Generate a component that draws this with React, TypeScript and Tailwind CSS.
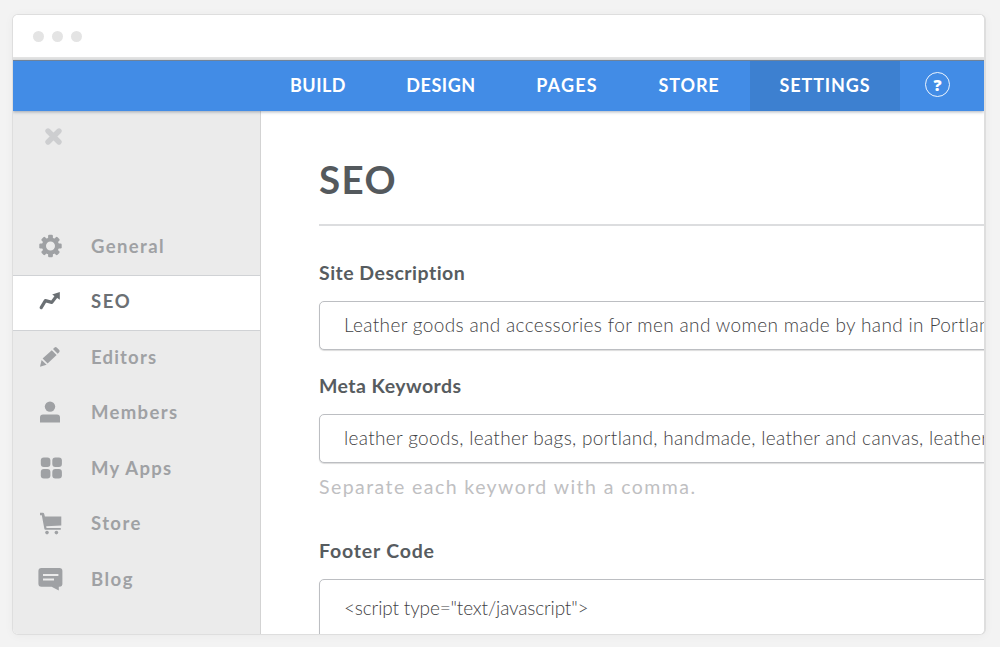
import type { ReactNode } from "react";
import clsx from "clsx";

const navItems = [
  { label: "BUILD", className: "w-[115px] pl-px tracking-[0.5px]" },
  { label: "DESIGN", className: "w-[131px] pl-px tracking-[0.55px]" },
  { label: "PAGES", className: "w-[122px] tracking-[1.2px]" },
  { label: "STORE", className: "w-[122px] tracking-[0.9px]" },
  { label: "SETTINGS", className: "w-[150px] bg-[#3d80d0] tracking-[0.85px]" },
];

function GearIcon() {
  return (
    <svg width="24" height="24" viewBox="0 0 24 24" fill="currentColor">
      <path
        fillRule="evenodd"
        d="M12.5 3.4a8.6 8.6 0 1 0 0 17.2a8.6 8.6 0 0 0 0-17.2zM12.5 7.5a4.5 4.5 0 1 1 0 9a4.5 4.5 0 0 1 0-9z"
      />
      {[0, 45, 90, 135, 180, 225, 270, 315].map((angle) => (
        <rect key={angle} x="10.1" y="0.8" width="4.8" height="5" rx="1.2" transform={`rotate(${angle} 12.5 12)`} />
      ))}
    </svg>
  );
}

function TrendIcon() {
  return (
    <svg width="24" height="24" viewBox="0 0 24 24">
      <path
        d="M3.2 18.6L7.4 11.6L13.8 13.4L18.4 7.2"
        fill="none"
        stroke="currentColor"
        strokeWidth="3.2"
        strokeLinecap="round"
        strokeLinejoin="round"
      />
      <path d="M14.2 5.6L21.8 3V10.8z" fill="currentColor" />
    </svg>
  );
}

function PencilIcon() {
  return (
    <svg width="24" height="24" viewBox="0 0 24 24" fill="currentColor">
      <path d="M2 21.8L3.6 15L8.6 19.8z" />
      <path d="M4.6 13.6L13.8 5.2L18.6 9.9L9.6 18.6z" />
      <path d="M15 4L16.6 2.6a1.5 1.5 0 0 1 2.1 0L21.2 5.1a1.5 1.5 0 0 1 0 2.1L19.7 8.7z" />
    </svg>
  );
}

function PersonIcon() {
  return (
    <svg width="24" height="24" viewBox="0 0 24 24" fill="currentColor">
      <circle cx="12" cy="6.6" r="5.2" />
      <path d="M2 22.4V17.4a3 3 0 0 1 3-3H19a3 3 0 0 1 3 3V22.4z" />
    </svg>
  );
}

function AppsIcon() {
  return (
    <svg width="24" height="24" viewBox="0 0 24 24" fill="currentColor">
      <rect x="2.8" y="1.4" width="9.6" height="9.6" rx="3" />
      <rect x="14.3" y="1.4" width="9.6" height="9.6" rx="3" />
      <rect x="2.8" y="13" width="9.6" height="9.6" rx="3" />
      <rect x="14.3" y="13" width="9.6" height="9.6" rx="3" />
    </svg>
  );
}

function CartIcon() {
  return (
    <svg width="24" height="24" viewBox="0 0 24 24" fill="currentColor">
      <path d="M2 1.8H4.8Q6 1.8 6.3 3.2L6.9 5.4H23.3V14.6L8.2 15.2L8.5 17H22.8V18.8H7.2Q6.6 18.8 6.4 18L3.8 4.2H2z" />
      <circle cx="9" cy="21.6" r="1.8" />
      <circle cx="18.4" cy="21.6" r="1.8" />
    </svg>
  );
}

function CommentIcon() {
  return (
    <svg width="24" height="24" viewBox="0 0 24 24" fill="currentColor" className="overflow-visible">
      <path
        fillRule="evenodd"
        d="M3.4 1H21.4a3 3 0 0 1 3 3V16.8a3 3 0 0 1-3 3H20.8V23.4L13.6 19.8H3.4a3 3 0 0 1-3-3V4a3 3 0 0 1 3-3zM5 7V9H20.4V7zM5 11.6V13.6H16V11.6z"
      />
    </svg>
  );
}

const menuItems: { label: string; icon: ReactNode; className: string; active?: boolean }[] = [
  { label: "General", icon: <GearIcon />, className: "h-[56px] pb-[2px] tracking-[1.4px]" },
  { label: "SEO", icon: <TrendIcon />, className: "h-[56px] pb-[4px] tracking-[1.6px]", active: true },
  { label: "Editors", icon: <PencilIcon />, className: "h-[54px] pb-[2px] tracking-[1.2px]" },
  { label: "Members", icon: <PersonIcon />, className: "h-[56px] pb-[2px] tracking-[1.35px]" },
  { label: "My Apps", icon: <AppsIcon />, className: "h-[56px] pb-[2px] tracking-[1.3px]" },
  { label: "Store", icon: <CartIcon />, className: "h-[55px] pb-[3px] tracking-[1.4px]" },
  { label: "Blog", icon: <CommentIcon />, className: "h-[56px] pb-[2px] tracking-[1.5px]" },
];

function TitleBar() {
  return (
    <div className="flex h-[45px] shrink-0 items-center gap-2 border-b-3 border-[#e4e4e4] bg-white pl-5">
      <span className="size-[11px] rounded-full bg-[#e4e4e4]" />
      <span className="size-[11px] rounded-full bg-[#e4e4e4]" />
      <span className="size-[11px] rounded-full bg-[#e4e4e4]" />
    </div>
  );
}

function Navbar() {
  return (
    <nav className="z-10 flex h-[51px] shrink-0 border-t border-[#6f8299] bg-[#428ce6] pl-[247px] text-lg font-bold text-white shadow-[0_1px_3px_rgba(40,60,90,0.4)]">
      {navItems.map(({ label, className }) => (
        <a key={label} className={clsx("flex items-center justify-center pb-[3px]", className)}>
          {label}
        </a>
      ))}
      <a className="flex w-[75px] items-center justify-center pb-[3px]">
        <span className="flex size-[25px] items-center justify-center rounded-full border-[1.5px] border-white/90 font-['Open_Sans',sans-serif] text-base leading-none font-extrabold">
          ?
        </span>
      </a>
    </nav>
  );
}

function Sidebar() {
  return (
    <aside className="flex w-[248px] shrink-0 flex-col border-r border-[#d3d3d3] bg-[#ebebeb]">
      <div className="h-[108px] pt-4 pl-[31px] text-[#cdced0]">
        <svg width="19" height="19" viewBox="0 0 19 19">
          <path d="M4 4L15 15M15 4L4 15" stroke="currentColor" strokeWidth="5.4" strokeLinecap="round" />
        </svg>
      </div>
      {menuItems.map(({ label, icon, className, active }) => (
        <a
          key={label}
          className={clsx(
            "flex shrink-0 items-center gap-[29px] pl-[25px] text-[18.5px] font-bold",
            active ? "border-y border-[#d0d2d5] bg-white text-[#6b7074]" : "text-[#9fa1a4]",
            className
          )}
        >
          {icon}
          <span className="pt-[2px]">{label}</span>
        </a>
      ))}
    </aside>
  );
}

type FieldProps = { label: string; value: string; labelClassName: string; className: string };

function Field({ label, value, labelClassName, className }: FieldProps) {
  return (
    <div className="flex shrink-0 flex-col">
      <label className={clsx("h-7 text-[19.5px] leading-7 font-bold text-[#575c60]", labelClassName)}>{label}</label>
      <div
        className={clsx(
          "mt-[14px] flex w-[760px] rounded-[5px] border border-[#bcbec2] bg-white pl-6 text-[19px] leading-[46px] font-light whitespace-nowrap text-[#3f4244] shadow-[0_1px_1px_rgba(0,0,0,0.14)]",
          className
        )}
      >
        {value}
      </div>
    </div>
  );
}

function SeoPage() {
  return (
    <main className="flex flex-1 flex-col overflow-hidden pl-[58px]">
      <h1 className="mt-10 h-[56px] shrink-0 text-[38.5px] leading-[56px] font-bold tracking-[1.4px] text-[#54595d]">
        SEO
      </h1>
      <div className="mt-[17px] mb-[33px] h-[2px] shrink-0 bg-[#dcdddf]" />
      <Field
        label="Site Description"
        value="Leather goods and accessories for men and women made by hand in Portlan"
        labelClassName="tracking-[0.48px]"
        className="h-[49px] tracking-[0.35px]"
      />
      <div className="h-[22px] shrink-0" />
      <Field
        label="Meta Keywords"
        value="leather goods, leather bags, portland, handmade, leather and canvas, leather"
        labelClassName="tracking-[0.45px]"
        className="h-[49px] tracking-[0.33px]"
      />
      <p className="mt-[10px] mb-9 h-7 shrink-0 text-[19.5px] leading-7 tracking-[1.43px] text-[#bfc0c2]">
        Separate each keyword with a comma.
      </p>
      <Field
        label="Footer Code"
        value={'<script type="text/javascript">'}
        labelClassName="tracking-[0.8px]"
        className="h-[120px] pt-[5px] tracking-[-0.15px]"
      />
    </main>
  );
}

export default function App() {
  return (
    <div className="h-[647px] w-[1000px] overflow-hidden bg-[#f3f3f3] pt-[14px] pl-3 font-['Lato',sans-serif]">
      <div className="flex h-[621px] w-[974px] flex-col overflow-hidden rounded-[6px] border border-r-2 border-[#dedede] bg-white shadow-[0_1px_10px_rgba(0,0,0,0.04)]">
        <TitleBar />
        <Navbar />
        <div className="flex min-h-0 flex-1">
          <Sidebar />
          <SeoPage />
        </div>
      </div>
    </div>
  );
}
